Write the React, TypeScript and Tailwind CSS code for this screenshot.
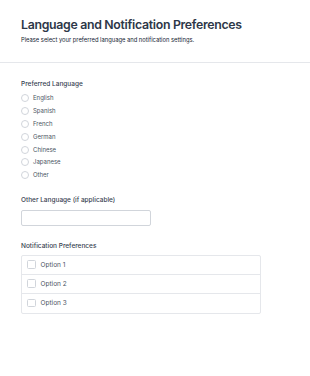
import React, { useState } from "react";

const languages = ["English", "Spanish", "French", "German", "Chinese", "Japanese", "Other"];
const options = ["Option 1", "Option 2", "Option 3"];

export default function App() {
  const [lang, setLang] = useState<string>("");
  const [other, setOther] = useState("");
  const [checked, setChecked] = useState<Record<string, boolean>>({});

  return (
    <div className="min-h-screen w-full bg-white font-['Inter',sans-serif] text-[#1f2937]">
      {/* Header */}
      <header className="px-[21px] pt-[17px] pb-[18px] border-b border-[#e5e7eb]">
        <h1 className="text-[12.3px] leading-[16px] font-semibold text-[#2d3748] tracking-[-0.3px]">
          Language and Notification Preferences
        </h1>
        <p className="mt-[3px] text-[5.8px] leading-[8px] text-[#141c33]">
          Please select your preferred language and notification settings.
        </p>
      </header>

      <main className="px-[21px] pt-[17px]">
        {/* Preferred language */}
        <section>
          <h2 className="text-[6.5px] leading-[8px] font-medium text-[#374151]">Preferred Language</h2>
          <div className="mt-[4px] flex flex-col">
            {languages.map((l) => (
              <label key={l} className="h-[12.8px] flex items-center gap-[4px] cursor-pointer">
                <span
                  onClick={() => setLang(l)}
                  className={`w-[8px] h-[8px] rounded-full border-[0.75px] border-[#d1d5db] bg-white shrink-0 ${
                    lang === l ? "border-[#4f46e5]" : ""
                  }`}
                />
                <span className="text-[6px] leading-[8px] text-[#4b5563]">{l}</span>
              </label>
            ))}
          </div>
        </section>

        {/* Other language */}
        <section className="mt-[14px]">
          <h2 className="text-[6.5px] leading-[8px] font-medium text-[#374151]">Other Language (if applicable)</h2>
          <input
            value={other}
            onChange={(e) => setOther(e.target.value)}
            className="mt-[6px] block w-[130px] h-[16.5px] rounded-[2px] border-[0.75px] border-[#d1d5db] bg-white px-[4px] text-[6.5px] outline-none"
          />
        </section>

        {/* Notification preferences */}
        <section className="mt-[15.5px]">
          <h2 className="text-[6.5px] leading-[8px] font-medium text-[#374151]">Notification Preferences</h2>
          <div className="mt-[5px] w-[240px] rounded-[2px] border-[0.75px] border-[#e5e7eb] divide-y divide-[#e5e7eb]">
            {options.map((o) => (
              <label key={o} className="h-[19px] flex items-center gap-[5px] pl-[5px] cursor-pointer">
                <span
                  onClick={() => setChecked({ ...checked, [o]: !checked[o] })}
                  className="w-[8.5px] h-[8.5px] rounded-[1.5px] border-[0.75px] border-[#d1d5db] bg-white shrink-0"
                />
                <span className="text-[6.5px] leading-[8px] text-[#4b5563]">{o}</span>
              </label>
            ))}
          </div>
        </section>
      </main>
    </div>
  );
}
